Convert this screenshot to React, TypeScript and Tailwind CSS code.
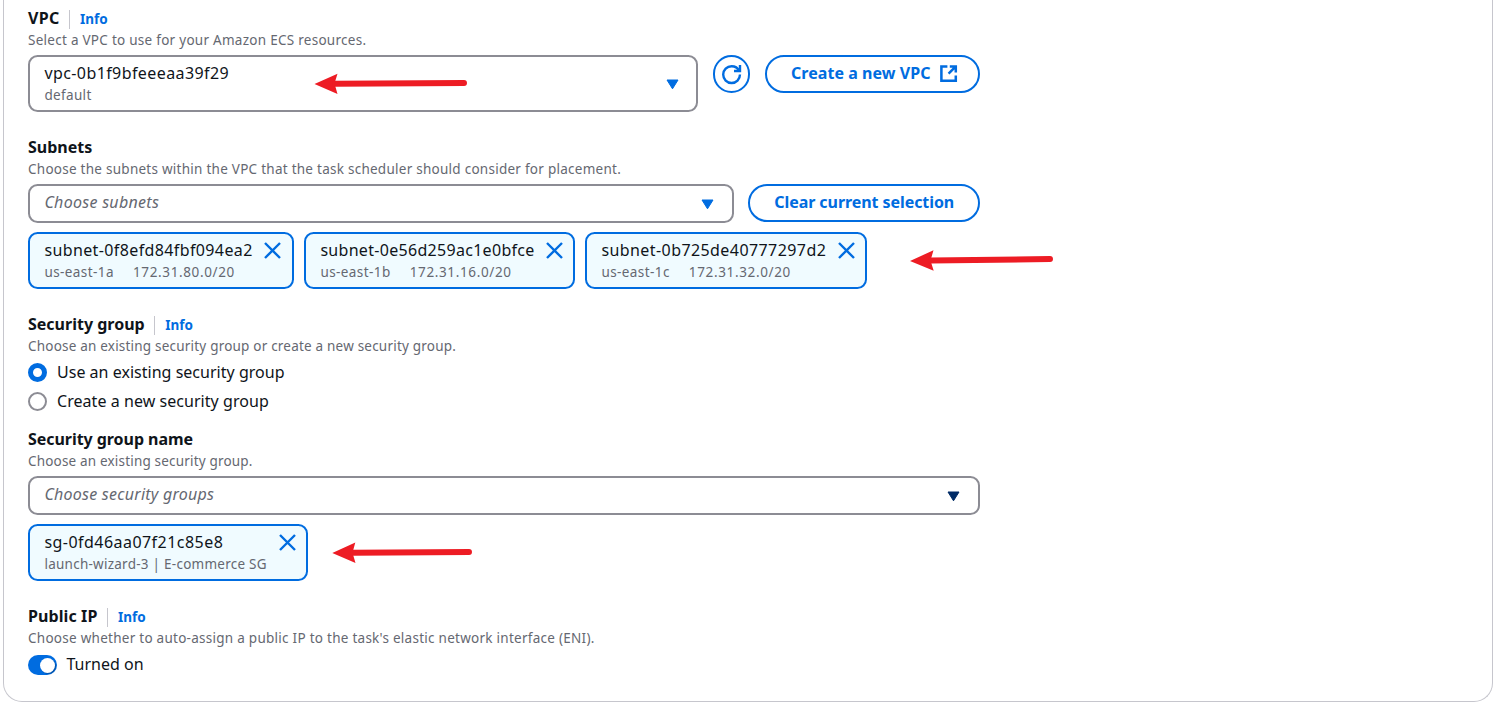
import type { ReactNode } from "react";

function Label({ children, info, tracking = "" }: { children: ReactNode; info?: boolean; tracking?: string }) {
  return (
    <div className="flex h-6 items-center">
      <span className={`text-base leading-6 font-bold text-[#0f141a] ${tracking}`}>{children}</span>
      {info && (
        <>
          <span className="mt-[3px] ml-[9.5px] h-[19px] w-px bg-[#c6c6cd]" />
          <a className="mt-px ml-2.5 text-[13.5px] leading-5 font-bold text-[#006ce0]">Info</a>
        </>
      )}
    </div>
  );
}

function Description({ children, tracking }: { children: ReactNode; tracking: string }) {
  return <p className={`h-5 text-[13.5px] leading-5 whitespace-nowrap text-[#656871] ${tracking}`}>{children}</p>;
}

function Caret({ className }: { className: string }) {
  return (
    <svg viewBox="0 0 13 11" className={`mt-px h-[11px] w-[13px] ${className}`}>
      <path d="M1 1h11L6.5 9.8z" fill="currentColor" stroke="currentColor" strokeWidth="1" strokeLinejoin="round" />
    </svg>
  );
}

function Placeholder({ children, tracking, width, caret }: { children: ReactNode; tracking: string; width: string; caret: string }) {
  return (
    <div className={`flex h-[39px] items-center justify-between rounded-[9.6px] border-2 border-[#8c8c94] pr-[18px] pl-[14.4px] ${width}`}>
      <span className={`mb-[3px] text-base leading-6 text-[#656871] italic ${tracking}`}>{children}</span>
      <Caret className={caret} />
    </div>
  );
}

function Token({ width, name, tracking, children }: { width: string; name: string; tracking: string; children: ReactNode }) {
  return (
    <div className={`flex h-[57px] justify-between rounded-[9.6px] border-2 border-[#006ce0] bg-[#f0fbff] pt-1 pl-[14.4px] ${width}`}>
      <div className="whitespace-nowrap">
        <div className={`text-base leading-6 text-[#0f141a] ${tracking}`}>{name}</div>
        <div className="flex text-[13.5px] leading-5 text-[#656871]">{children}</div>
      </div>
      <svg viewBox="0 0 19 19" className="mt-[2.5px] h-[19px] w-[19px] shrink-0 text-[#006ce0]">
        <path d="M2 2l15 15M17 2L2 17" fill="none" stroke="currentColor" strokeWidth="2.4" />
      </svg>
    </div>
  );
}

function SubnetDetails({ zone, cidr }: { zone: string; cidr: string }) {
  return (
    <>
      <span className="tracking-[0.42px]">{zone}</span>
      <span className="ml-[19px] tracking-[0.64px]">{cidr}</span>
    </>
  );
}

function Arrows() {
  return (
    <svg viewBox="0 0 1497 718" className="pointer-events-none absolute inset-0 h-[718px] w-[1497px] text-[#ed1c24]">
      <g fill="currentColor" stroke="currentColor" strokeLinecap="round">
        <path d="M314.500 84L337.500 73.700L334.500 83.500L337.500 94z" stroke="none" />
        <path d="M335 83.700L464 83" strokeWidth="6" />
        <path d="M910 260.900L933.500 250.300L930.500 260.500L933.700 270.800z" stroke="none" />
        <path d="M931 260.500L1050 259" strokeWidth="6" />
        <path d="M332.300 553L355.300 542.500L352.500 552.700L355.500 563z" stroke="none" />
        <path d="M353 552.700L469 552" strokeWidth="6" />
      </g>
    </svg>
  );
}

const button = "flex h-[38px] items-start rounded-full border-2 border-[#006ce0] pt-1 text-base leading-6 font-bold whitespace-nowrap text-[#006ce0]";

export default function App() {
  return (
    <div className="relative h-[718px] w-[1497px] overflow-hidden bg-white font-['Noto_Sans',sans-serif]">
      <main className="ml-[3px] h-[702px] w-[1490px] rounded-b-[19px] border border-t-0 border-[#c6c6cd] pt-1.5 pl-6">
        <section>
          <Label info tracking="tracking-[0.3px]">VPC</Label>
          <Description tracking="tracking-[0.27px]">Select a VPC to use for your Amazon ECS resources.</Description>
          <div className="mt-[5px] flex">
            <div className="flex h-[57px] w-[670px] items-center justify-between rounded-[9.6px] border-2 border-[#8c8c94] pr-[17px] pl-[14.4px]">
              <div className="-mt-px">
                <div className="text-base leading-6 tracking-[0.41px] text-[#0f141a]">vpc-0b1f9bfeeeaa39f29</div>
                <div className="text-[13.5px] leading-5 tracking-[0.35px] text-[#656871]">default</div>
              </div>
              <Caret className="text-[#006ce0]" />
            </div>
            <button className="ml-[15px] flex h-[38px] w-[37px] items-center justify-center rounded-full border-2 border-[#006ce0] text-[#006ce0]">
              <svg viewBox="0 0 16 16" className="mt-px h-[19.2px] w-[19.2px] shrink-0 overflow-visible" fill="none" stroke="currentColor" strokeWidth="2">
                <path d="M15 8c0 3.87-3.13 7-7 7s-7-3.13-7-7 3.13-7 7-7c2.79 0 5.2 1.63 6.33 4" />
                <path d="M10 5h5V0" />
              </svg>
            </button>
            <button className={`ml-[15px] w-[215px] pl-6 tracking-[0.05px] ${button}`}>
              Create a new VPC
              <svg viewBox="0 0 16 16" className="mt-[3.4px] ml-[8.4px] h-[19.2px] w-[19.2px] shrink-0" fill="none" stroke="currentColor" strokeWidth="2.1">
                <path d="M7 2H2v12h12v-4.500" />
                <path d="M9 2h5v5M14 2L8 8" />
              </svg>
            </button>
          </div>
        </section>

        <section className="mt-[23px]">
          <Label>Subnets</Label>
          <Description tracking="tracking-[0.259px]">Choose the subnets within the VPC that the task scheduler should consider for placement.</Description>
          <div className="mt-[5px] flex gap-3.5">
            <Placeholder width="w-[706px]" tracking="tracking-[0.29px]" caret="text-[#006ce0]">Choose subnets</Placeholder>
            <button className={`w-[232px] pl-[24.3px] tracking-[-0.07px] ${button}`}>Clear current selection</button>
          </div>
          <div className="mt-[9px] flex gap-2.5">
            <Token width="w-[266px] pr-2.5" name="subnet-0f8efd84fbf094ea2" tracking="tracking-[0.38px]">
              <SubnetDetails zone="us-east-1a" cidr="172.31.80.0/20" />
            </Token>
            <Token width="w-[271px] pr-[9px]" name="subnet-0e56d259ac1e0bfce" tracking="tracking-[0.3px]">
              <SubnetDetails zone="us-east-1b" cidr="172.31.16.0/20" />
            </Token>
            <Token width="w-[282px] pr-[9px]" name="subnet-0b725de40777297d2" tracking="tracking-[0.42px]">
              <SubnetDetails zone="us-east-1c" cidr="172.31.32.0/20" />
            </Token>
          </div>
        </section>

        <section className="mt-[23px]">
          <Label info>Security group</Label>
          <Description tracking="tracking-[0.205px]">Choose an existing security group or create a new security group.</Description>
          <div className="mt-1 flex flex-col gap-[5px] text-base leading-6 text-[#0f141a]">
            <label className="flex h-6 items-center tracking-[0.02px]">
              <span className="mt-px mr-2.5 h-[19px] w-[19px] rounded-full border-[5.5px] border-[#006ce0]" />
              Use an existing security group
            </label>
            <label className="flex h-6 items-center tracking-[0.05px]">
              <span className="mt-px mr-2.5 h-[19px] w-[19px] rounded-full border-2 border-[#8c8c94]" />
              Create a new security group
            </label>
          </div>
        </section>

        <section className="mt-3.5">
          <Label tracking="tracking-[-0.05px]">Security group name</Label>
          <Description tracking="tracking-[0.18px]">Choose an existing security group.</Description>
          <div className="mt-[5px]">
            <Placeholder width="w-[952px]" tracking="tracking-[0.25px]" caret="text-[#002b66]">Choose security groups</Placeholder>
          </div>
          <div className="mt-[9px] flex">
            <Token width="w-[280px] pr-[9px]" name="sg-0fd46aa07f21c85e8" tracking="tracking-[0.46px]">
              <span className="tracking-[0.255px]">launch-wizard-3 | E-commerce SG</span>
            </Token>
          </div>
        </section>

        <section className="mt-[23px]">
          <Label info tracking="tracking-[0.1px]">Public IP</Label>
          <Description tracking="tracking-[0.265px]">Choose whether to auto-assign a public IP to the task's elastic network interface (ENI).</Description>
          <label className="mt-1 flex h-6 items-center text-base leading-6 text-[#0f141a]">
            <span className="mt-0.5 mr-[9.5px] flex h-[19.5px] w-[29px] items-center justify-end rounded-full bg-[#006ce0] pr-[2.5px]">
              <span className="h-[15px] w-[15px] rounded-full bg-white shadow-[1px_1px_1px_rgba(0,0,0,0.25)]" />
            </span>
            Turned on
          </label>
        </section>
      </main>
      <Arrows />
    </div>
  );
}
